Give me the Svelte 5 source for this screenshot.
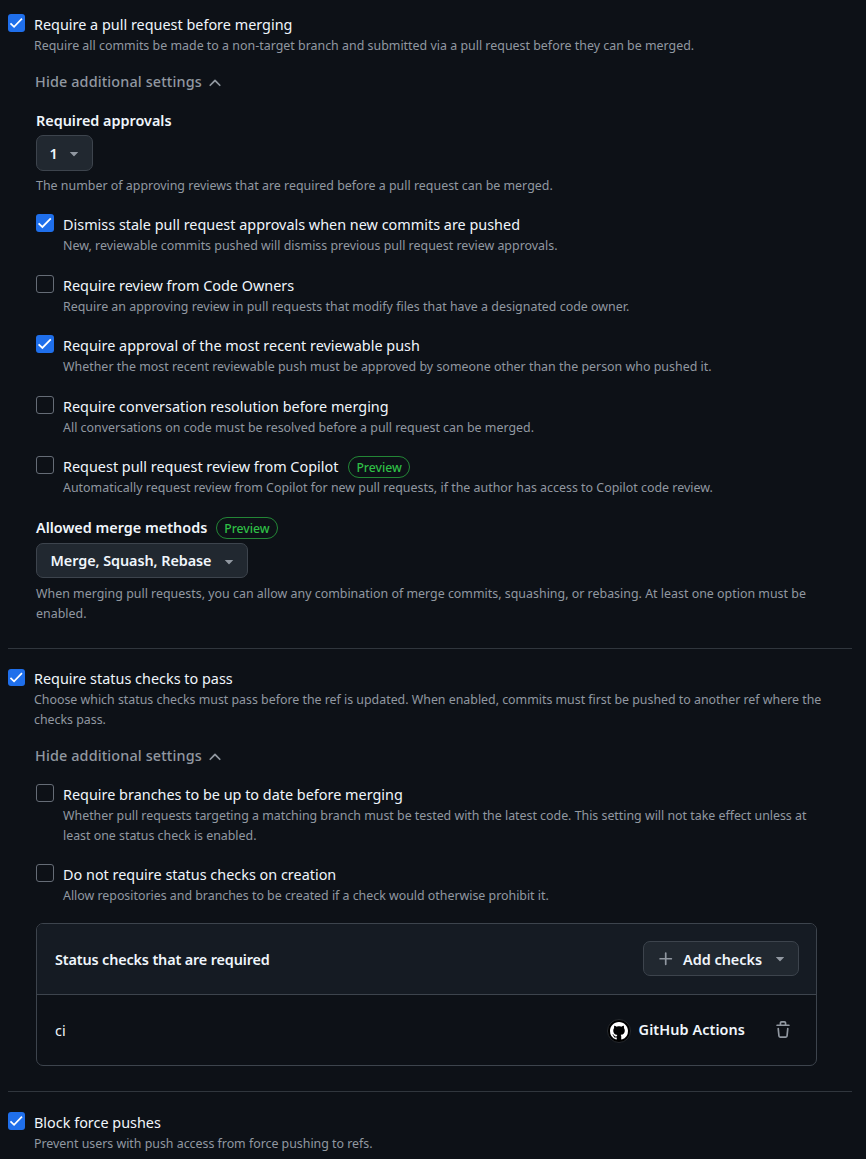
<script>
  const reviewRules = [
    { on: true, title: 'Dismiss stale pull request approvals when new commits are pushed', text: 'New, reviewable commits pushed will dismiss previous pull request review approvals.' },
    { on: false, title: 'Require review from Code Owners', text: 'Require an approving review in pull requests that modify files that have a designated code owner.' },
    { on: true, title: 'Require approval of the most recent reviewable push', text: 'Whether the most recent reviewable push must be approved by someone other than the person who pushed it.' },
    { on: false, title: 'Require conversation resolution before merging', text: 'All conversations on code must be resolved before a pull request can be merged.' },
    { on: false, title: 'Request pull request review from Copilot', preview: true, text: 'Automatically request review from Copilot for new pull requests, if the author has access to Copilot code review.' }
  ];
  const statusRules = [
    { on: false, title: 'Require branches to be up to date before merging', text: 'Whether pull requests targeting a matching branch must be tested with the latest code. This setting will not take effect unless at least one status check is enabled.' },
    { on: false, title: 'Do not require status checks on creation', text: 'Allow repositories and branches to be created if a check would otherwise prohibit it.' }
  ];
</script>

{#snippet rule(r)}
  <div class="rule">
    <span class="box" class:on={r.on} role="checkbox" aria-checked={r.on} aria-label={r.title} tabindex="0">
      {#if r.on}
        <svg viewBox="0 0 18 18"><path d="M2.6 9.4 6.4 13 14.8 4.4" fill="none" stroke="#fff" stroke-width="1.8" /></svg>
      {/if}
    </span>
    <div class="body">
      <div class="title"><span>{r.title}</span>{#if r.preview}<span class="preview">Preview</span>{/if}</div>
      <p>{r.text}</p>
    </div>
  </div>
{/snippet}

{#snippet toggle()}
  <div class="toggle">
    <span>Hide additional settings</span>
    <svg width="18" height="18" viewBox="0 0 16 16" fill="currentColor"><path d="M3.22 10.53a.749.749 0 0 1 0-1.06l4.25-4.25a.749.749 0 0 1 1.06 0l4.25 4.25a.749.749 0 1 1-1.06 1.06L8 6.811 4.28 10.53a.749.749 0 0 1-1.06 0Z" /></svg>
  </div>
{/snippet}

{#snippet caret()}
  <svg class="caret" width="18" height="18" viewBox="0 0 16 16" fill="currentColor"><path d="m4.427 7.427 3.396 3.396a.25.25 0 0 0 .354 0l3.396-3.396A.25.25 0 0 0 11.396 7H4.604a.25.25 0 0 0-.177.427Z" /></svg>
{/snippet}

<main>
  <section class="first">
    {@render rule({ on: true, title: 'Require a pull request before merging', text: 'Require all commits be made to a non-target branch and submitted via a pull request before they can be merged.' })}
    {@render toggle()}
    <div class="nested">
      <div class="label approvals">Required approvals</div>
      <button class="count">1{@render caret()}</button>
      <p class="note">The number of approving reviews that are required before a pull request can be merged.</p>
      <div class="rules reviews">
        {#each reviewRules as r}{@render rule(r)}{/each}
      </div>
      <div class="label methods"><span>Allowed merge methods</span><span class="preview">Preview</span></div>
      <button class="merge">Merge, Squash, Rebase{@render caret()}</button>
      <p class="note methods-note">When merging pull requests, you can allow any combination of merge commits, squashing, or rebasing. At least one option must be enabled.</p>
    </div>
  </section>

  <section class="second">
    {@render rule({ on: true, title: 'Require status checks to pass', text: 'Choose which status checks must pass before the ref is updated. When enabled, commits must first be pushed to another ref where the checks pass.' })}
    {@render toggle()}
    <div class="nested">
      <div class="rules statuses">
        {#each statusRules as r}{@render rule(r)}{/each}
      </div>
      <div class="card">
        <div class="head">
          <span class="label heading">Status checks that are required</span>
          <button class="add">
            <svg width="18" height="18" viewBox="0 0 16 16" fill="currentColor"><path d="M7.75 2a.75.75 0 0 1 .75.75V7h4.25a.75.75 0 0 1 0 1.5H8.5v4.25a.75.75 0 0 1-1.5 0V8.5H2.75a.75.75 0 0 1 0-1.5H7V2.75A.75.75 0 0 1 7.75 2Z" /></svg>
            <span>Add checks</span>{@render caret()}
          </button>
        </div>
        <div class="row">
          <span class="name">ci</span>
          <span class="avatar"><svg width="18" height="18" viewBox="0 0 16 16" fill="#fff"><path d="M8 0c4.42 0 8 3.58 8 8a8.013 8.013 0 0 1-5.45 7.59c-.4.08-.55-.17-.55-.38 0-.27.01-1.13.01-2.2 0-.75-.25-1.23-.54-1.48 1.78-.2 3.65-.88 3.65-3.95 0-.88-.31-1.59-.82-2.15.08-.2.36-1.02-.08-2.12 0 0-.67-.22-2.2.82-.64-.18-1.32-.27-2-.27-.68 0-1.36.09-2 .27-1.53-1.03-2.2-.82-2.2-.82-.44 1.1-.16 1.92-.08 2.12-.51.56-.82 1.28-.82 2.15 0 3.06 1.86 3.75 3.64 3.95-.23.2-.44.55-.51 1.07-.46.21-1.61.55-2.33-.66-.15-.24-.6-.83-1.23-.82-.67.01-.27.38.01.53.34.19.73.9.82 1.13.16.45.68 1.31 2.69.94 0 .67.01 1.3.01 1.49 0 .21-.15.45-.55.38A7.995 7.995 0 0 1 0 8c0-4.42 3.58-8 8-8Z" /></svg></span>
          <span class="label source">GitHub Actions</span>
          <svg class="trash" width="18" height="18" viewBox="0 0 16 16" fill="currentColor"><path d="M11 1.75V3h2.25a.75.75 0 0 1 0 1.5H2.75a.75.75 0 0 1 0-1.5H5V1.75C5 .784 5.784 0 6.75 0h2.5C10.216 0 11 .784 11 1.75ZM4.496 6.675l.66 6.6a.25.25 0 0 0 .249.225h5.19a.25.25 0 0 0 .249-.225l.66-6.6a.75.75 0 0 1 1.492.149l-.66 6.6A1.748 1.748 0 0 1 10.595 15h-5.19a1.75 1.75 0 0 1-1.741-1.575l-.66-6.6a.75.75 0 1 1 1.492-.15ZM6.5 1.75V3h3V1.75a.25.25 0 0 0-.25-.25h-2.5a.25.25 0 0 0-.25.25Z" /></svg>
        </div>
      </div>
    </div>
  </section>

  <section class="third">
    {@render rule({ on: true, title: 'Block force pushes', text: 'Prevent users with push access from force pushing to refs.' })}
  </section>
</main>

<style>
  :global(body) { margin: 0; background: #0d1117; overflow: hidden; }
  main {
    height: 1159px; overflow: hidden; box-sizing: border-box; padding: 0 14px 0 8px;
    background: #0d1117; color: #f0f6fc;
    font: 400 14.4px/22px "Noto Sans", sans-serif;
  }
  section { box-sizing: border-box; }
  .first { height: 648px; padding-top: 14px; }
  .second { height: 443px; padding-top: 19px; border-top: 1px solid #30363d; }
  .third { padding-top: 20px; border-top: 1px solid #30363d; }
  .rule { display: flex; gap: 9px; }
  .box {
    width: 17px; height: 18px; flex: none; box-sizing: border-box;
    border: 1px solid #656c76; border-radius: 3px;
  }
  .box.on { border: 0; background: #1f6feb; }
  .box svg { display: block; width: 100%; height: 100%; }
  .nested .box { width: 18px; }
  .second > .rule > .box { height: 17px; margin-top: 1px; }
  .body { min-width: 0; }
  .title { display: flex; align-items: center; gap: 10px; height: 22px; white-space: nowrap; line-height: 21px; letter-spacing: 0.01px; }
  .title > span:first-child { height: 22px; }
  p { margin: 0; font-size: 12.4px; line-height: 20px; letter-spacing: 0.015px; color: #9198a1; }
  .second p, .third p { letter-spacing: -0.012px; }
  .preview {
    box-sizing: border-box; height: 22px; padding: 0 7px; border: 1px solid #238636; border-radius: 11px;
    color: #2fbf46; font-size: 12.2px; font-weight: 500; line-height: 21px; letter-spacing: 0;
  }
  .toggle {
    display: flex; align-items: center; gap: 4px; height: 22px; margin: 15px 0 0 27px;
    color: #9198a1; font-weight: 500; letter-spacing: 0.13px;
  }
  .toggle svg { margin-top: 2px; }
  .nested { margin: 0 35px 0 28px; }
  .label { font-weight: 600; }
  .approvals { margin-top: 17px; height: 25px; }
  button {
    display: flex; align-items: center; box-sizing: border-box; height: 35px; margin: 0; padding: 0 9px 0 13.5px;
    background: #212830; border: 1px solid #3d444d; border-radius: 7px;
    color: #f0f6fc; font: inherit; font-weight: 600; white-space: nowrap;
  }
  .caret { margin: -1px 0 0 auto; color: #9198a1; }
  .count { width: 57px; height: 36px; padding-left: 12.5px; line-height: 23px; }
  .merge { width: 212px; padding-top: 1px; letter-spacing: -0.06px; line-height: 24px; }
  .note { margin-top: 5px; }
  .reviews { margin-top: 18px; }
  .rules { display: flex; flex-direction: column; gap: 18.5px; }
  .methods { display: flex; align-items: center; gap: 9px; height: 22px; margin: 19px 0 4px; }
  .methods-note { margin-top: 6px; }
  .statuses { margin-top: 17px; gap: 18px; }
  .card { margin-top: 17px; border: 1px solid #3d444d; border-radius: 7px; overflow: hidden; width: 781px; height: 143px; box-sizing: border-box; }
  .head { display: flex; align-items: center; justify-content: space-between; box-sizing: border-box; height: 71px; padding: 0 17px 1px 18px; background: #151b23; border-bottom: 1px solid #3d444d; }
  .heading { padding-top: 2px; letter-spacing: -0.14px; }
  .add { width: 156px; padding-left: 13px; }
  .add > svg { color: #9198a1; }
  .add span { margin-left: 8px; padding-top: 2px; }
  .row { display: flex; align-items: center; height: 70px; padding: 0 24px 0 18px; }
  .name { margin-right: auto; padding-top: 2px; }
  .avatar { display: flex; align-items: center; justify-content: center; width: 22px; height: 22px; margin-top: 1px; border-radius: 50%; background: #000; border: 1px solid #25292e; }
  .source { margin-left: 8px; letter-spacing: 0.09px; }
  .trash { margin-left: 29px; color: #9198a1; }
</style>
